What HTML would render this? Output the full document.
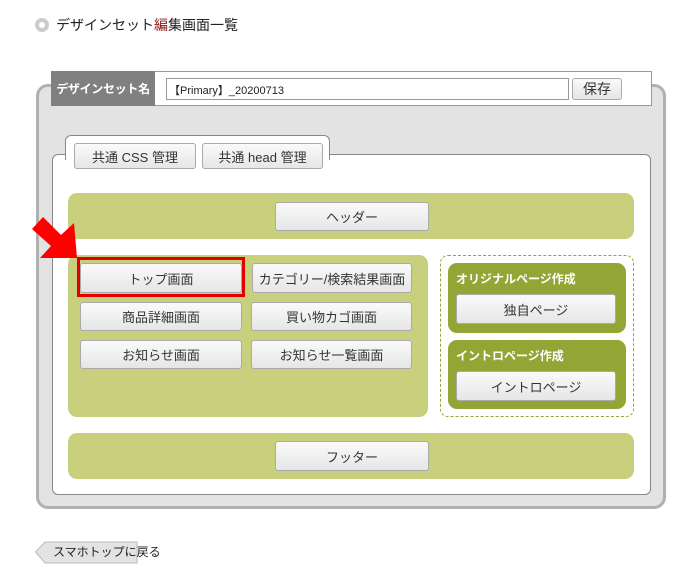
<!DOCTYPE html>
<html><head><meta charset="utf-8"><style>
*{box-sizing:border-box}
body{margin:0;width:700px;height:576px;background:#fff;font-family:"Liberation Sans","Noto Sans CJK JP",sans-serif;position:relative;overflow:hidden;color:#333}
.a{position:absolute}
.btn{position:absolute;background:linear-gradient(#fafafa,#e6e6e6);border:1px solid #aaa;border-radius:3px;font-size:13px;display:flex;align-items:center;justify-content:center;color:#333}
.band{position:absolute;background:#c8d07e;border-radius:9px}
.dg{position:absolute;background:#93a535;border-radius:9px;left:448px;width:178px}
.dg span{position:absolute;left:8px;top:7px;color:#fff;font-weight:bold;font-size:12px}
</style></head><body>
<div class="a" style="left:35px;top:18px;width:14px;height:14px;border-radius:50%;background:#ccc"></div>
<div class="a" style="left:39px;top:22px;width:6px;height:6px;border-radius:50%;background:#fff"></div>
<div class="a" style="left:56px;top:15px;font-size:14px;color:#222">デザインセット<span style="color:#8b1a1a">編</span>集画面一覧</div>

<div class="a" style="left:36px;top:84px;width:630px;height:425px;background:#e3e3e3;border:3px solid #b0b0b0;border-radius:12px"></div>
<div class="a" style="left:51px;top:71px;width:601px;height:35px;background:#fff;border:1px solid #999"></div>
<div class="a" style="left:51px;top:71px;width:104px;height:35px;background:#808080;color:#fff;font-weight:bold;font-size:12px;display:flex;align-items:center;justify-content:center;letter-spacing:-0.3px">デザインセット名</div>
<div class="a" style="left:166px;top:78px;width:403px;height:22px;border:1px solid #999;font-size:11px;padding:3px 2px;color:#222">【Primary】_20200713</div>
<div class="btn" style="left:572px;top:78px;width:50px;height:22px;font-size:14px">保存</div>

<div class="a" style="left:52px;top:154px;width:599px;height:341px;background:#fff;border:1px solid #888;border-radius:6px"></div>
<div class="a" style="left:65px;top:135px;width:265px;height:25px;background:#fff;border:1px solid #888;border-bottom:none;border-radius:6px 6px 0 0"></div>
<div class="btn" style="left:74px;top:143px;width:122px;height:26px">共通 CSS 管理</div>
<div class="btn" style="left:202px;top:143px;width:121px;height:26px">共通 head 管理</div>

<div class="band" style="left:68px;top:193px;width:566px;height:46px"></div>
<div class="btn" style="left:275px;top:202px;width:154px;height:29px">ヘッダー</div>

<div class="band" style="left:68px;top:255px;width:360px;height:162px"></div>
<div class="a" style="left:77px;top:257px;width:168px;height:40px;border:3px solid #e00000"></div>
<div class="btn" style="left:80px;top:263px;width:162px;height:30px">トップ画面</div>
<div class="btn" style="left:252px;top:263px;width:160px;height:30px">カテゴリー/検索結果画面</div>
<div class="btn" style="left:80px;top:302px;width:162px;height:29px">商品詳細画面</div>
<div class="btn" style="left:251px;top:302px;width:161px;height:29px">買い物カゴ画面</div>
<div class="btn" style="left:80px;top:340px;width:162px;height:29px">お知らせ画面</div>
<div class="btn" style="left:251px;top:340px;width:161px;height:29px">お知らせ一覧画面</div>

<div class="a" style="left:440px;top:255px;width:194px;height:162px;border:1px dashed #93a535;border-radius:8px"></div>
<div class="dg" style="top:263px;height:70px"><span>オリジナルページ作成</span></div>
<div class="btn" style="left:456px;top:294px;width:160px;height:30px">独自ページ</div>
<div class="dg" style="top:340px;height:69px"><span>イントロページ作成</span></div>
<div class="btn" style="left:456px;top:371px;width:160px;height:30px">イントロページ</div>

<div class="band" style="left:68px;top:433px;width:566px;height:46px"></div>
<div class="btn" style="left:275px;top:441px;width:154px;height:30px">フッター</div>

<svg class="a" style="left:0;top:0" width="100" height="300"><polygon points="43,217 61,235 74,223 77,258 40,258 51,246 32,229" fill="#f00"/></svg>

<svg class="a" style="left:35px;top:541px" width="104" height="23"><polygon points="0.5,11 10,1 102,1 102,22 10,22" fill="#e3e3e3" stroke="#bbb"/></svg>
<div class="a" style="left:53px;top:543px;font-size:12px;color:#222">スマホトップに戻る</div>
</body></html>
